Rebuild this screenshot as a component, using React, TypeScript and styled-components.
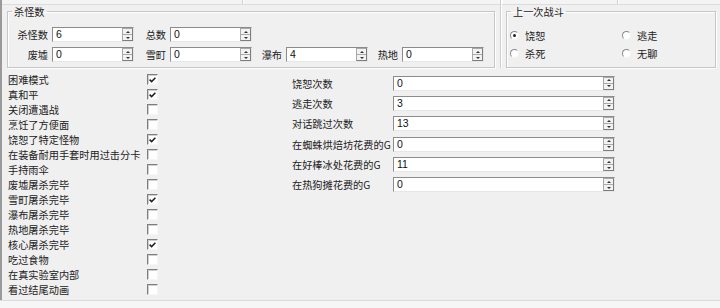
import React from 'react';
import styled, { createGlobalStyle } from 'styled-components';

const GlobalStyle = createGlobalStyle`
  html, body {
    margin: 0;
    padding: 0;
    background: #f0f0f0;
  }
  body {
    font-family: "Noto Sans CJK SC", "Liberation Sans", sans-serif;
    font-size: 10.2px;
    color: #222;
  }
`;

const Window = styled.div`
  width: 720px;
  height: 308px;
  display: flex;
  flex-direction: column;
  overflow: hidden;
  background: #f0f0f0;
`;

const Main = styled.div`
  flex: 1;
  display: flex;
  flex-direction: column;
  border-left: 2px solid #9a9a9a;
`;

const TopStrip = styled.div`
  height: 4px;
  display: flex;
  border-bottom: 1px solid #dcdcdc;
  background: #f4f4f4;
`;

const StripSeg = styled.div<{ $w: number }>`
  width: ${p => p.$w}px;
  border-right: 1px solid #d0d0d0;
  box-shadow: 1px 0 0 #fff;
`;

const TopRow = styled.div`
  display: flex;
  align-items: stretch;
  height: 63px;
`;

const Group = styled.fieldset<{ $w: number }>`
  width: ${p => p.$w}px;
  box-sizing: border-box;
  margin: 0 0 0 5px;
  border: 1px solid #c6c6c6;
  box-shadow: inset 1px 1px 0 #fff, 1px 1px 0 #fff;
  padding: 0;
  min-width: 0;
`;

const Legend = styled.legend`
  margin-left: 4px;
  padding: 0 2px;
  font-size: 10.2px;
  line-height: 13px;
  color: #222;
`;

const Separator = styled.div`
  width: 1px;
  margin-left: 5px;
  background: #cfcfcf;
  box-shadow: 1px 0 0 #fff;
  margin-top: -5px;
`;

const KillGrid = styled.div`
  display: grid;
  grid-template-columns: 34px 82px 28px 82px 26px 82px 26px 82px;
  grid-auto-rows: 15px;
  column-gap: 4px;
  row-gap: 5px;
  padding: 9px 0 0 6px;
  align-items: center;
`;

const FieldLabel = styled.span`
  text-align: right;
  line-height: 15px;
  white-space: nowrap;
`;

const Blank = styled.span``;

const SpinBox = styled.div`
  height: 15px;
  box-sizing: border-box;
  display: flex;
  background: #fff;
  border: 1px solid;
  border-color: #8c8c8c #e6e6e6 #e6e6e6 #8c8c8c;
`;

const SpinValue = styled.span`
  flex: 1;
  padding-left: 3px;
  font-family: "Liberation Sans", "DejaVu Sans", sans-serif;
  font-size: 10.5px;
  line-height: 13px;
  color: #111;
`;

const SpinButtons = styled.div`
  width: 11px;
  display: flex;
  flex-direction: column;
  border: 1px solid #a9a9a9;
  border-right-color: #7d7d7d;
  border-bottom-color: #7d7d7d;
  box-sizing: border-box;
  background: #f2f2f2;
`;

const SpinHalf = styled.div<{ $down?: boolean }>`
  flex: 1;
  display: flex;
  align-items: center;
  justify-content: center;
  border-top: ${p => (p.$down ? '1px solid #a9a9a9' : 'none')};
  &::after {
    content: '';
    width: 0;
    height: 0;
    border-left: 2px solid transparent;
    border-right: 2px solid transparent;
    ${p =>
      p.$down
        ? 'border-top: 2px solid #333;'
        : 'border-bottom: 2px solid #333;'}
  }
`;

function Spin({ value }: { value: string }) {
  return (
    <SpinBox>
      <SpinValue>{value}</SpinValue>
      <SpinButtons>
        <SpinHalf />
        <SpinHalf $down />
      </SpinButtons>
    </SpinBox>
  );
}

const RadioGrid = styled.div`
  display: grid;
  grid-template-columns: 112px 80px;
  grid-auto-rows: 15px;
  row-gap: 3px;
  padding: 10px 0 0 3px;
`;

const RadioItem = styled.label`
  display: flex;
  align-items: center;
  gap: 6px;
  line-height: 15px;
`;

const RadioDot = styled.span<{ $on?: boolean }>`
  width: 9px;
  height: 9px;
  box-sizing: border-box;
  border-radius: 50%;
  border: 1px solid;
  border-color: #8a8a8a #f4f4f4 #f4f4f4 #8a8a8a;
  background: #fff;
  display: flex;
  align-items: center;
  justify-content: center;
  &::after {
    content: '';
    width: 3px;
    height: 3px;
    border-radius: 50%;
    background: ${p => (p.$on ? '#222' : 'transparent')};
  }
`;

const BottomArea = styled.div`
  display: flex;
  align-items: flex-start;
  padding-top: 4px;
`;

const CheckList = styled.div`
  display: grid;
  grid-template-columns: 139px 11px;
  grid-auto-rows: 15px;
  padding-left: 6px;
  align-items: center;
`;

const CheckLabel = styled.span`
  line-height: 15px;
  white-space: nowrap;
`;

const CheckBox = styled.span`
  width: 11px;
  height: 11px;
  box-sizing: border-box;
  border: 1px solid;
  border-color: #7e7e7e #f6f6f6 #f6f6f6 #7e7e7e;
  box-shadow: inset 1px 1px 0 #cfcfcf;
  background: #fff;
  display: flex;
  align-items: center;
  justify-content: center;
`;

const CountGrid = styled.div`
  display: grid;
  grid-template-columns: 101px 222px;
  grid-auto-rows: 15px;
  row-gap: 5.4px;
  margin-left: 134px;
  padding-top: 3.5px;
  align-items: center;
`;

const CountLabel = styled.span`
  line-height: 15px;
  white-space: nowrap;
`;

const Footer = styled.div`
  height: 7px;
  border-top: 1px solid #dadada;
  background: #f6f6f6;
`;

function Check({ on }: { on: boolean }) {
  return (
    <CheckBox>
      {on && (
        <svg width="7" height="6" viewBox="0 0 7 6">
          <path d="M0.6 2.6 L2.6 4.6 L6.4 0.8" stroke="#1e1e1e" strokeWidth="1.5" fill="none" />
        </svg>
      )}
    </CheckBox>
  );
}

const checks: [string, boolean][] = [
  ['困难模式', true],
  ['真和平', true],
  ['关闭遭遇战', false],
  ['烹饪了方便面', false],
  ['饶恕了特定怪物', true],
  ['在装备耐用手套时用过击分卡', false],
  ['手持雨伞', false],
  ['废墟屠杀完毕', false],
  ['雪町屠杀完毕', true],
  ['瀑布屠杀完毕', false],
  ['热地屠杀完毕', false],
  ['核心屠杀完毕', true],
  ['吃过食物', false],
  ['在真实验室内部', false],
  ['看过结尾动画', false],
];

const counts: [string, string][] = [
  ['饶恕次数', '0'],
  ['逃走次数', '3'],
  ['对话跳过次数', '13'],
  ['在蜘蛛烘焙坊花费的G', '0'],
  ['在好棒冰处花费的G', '11'],
  ['在热狗摊花费的G', '0'],
];

export default function App() {
  return (
    <Window>
      <GlobalStyle />
      <Main>
        <TopStrip>
          <StripSeg $w={240} />
          <StripSeg $w={258} />
          <StripSeg $w={115} />
        </TopStrip>
        <TopRow>
          <Group $w={488}>
            <Legend>杀怪数</Legend>
            <KillGrid>
              <FieldLabel>杀怪数</FieldLabel>
              <Spin value="6" />
              <FieldLabel>总数</FieldLabel>
              <Spin value="0" />
              <Blank />
              <Blank />
              <Blank />
              <Blank />
              <FieldLabel>废墟</FieldLabel>
              <Spin value="0" />
              <FieldLabel>雪町</FieldLabel>
              <Spin value="0" />
              <FieldLabel>瀑布</FieldLabel>
              <Spin value="4" />
              <FieldLabel>热地</FieldLabel>
              <Spin value="0" />
            </KillGrid>
          </Group>
          <Separator />
          <Group $w={210}>
            <Legend>上一次战斗</Legend>
            <RadioGrid>
              <RadioItem><RadioDot $on />饶恕</RadioItem>
              <RadioItem><RadioDot />逃走</RadioItem>
              <RadioItem><RadioDot />杀死</RadioItem>
              <RadioItem><RadioDot />无聊</RadioItem>
            </RadioGrid>
          </Group>
        </TopRow>
        <BottomArea>
          <CheckList>
            {checks.map(([label, on]) => (
              <React.Fragment key={label}>
                <CheckLabel>{label}</CheckLabel>
                <Check on={on} />
              </React.Fragment>
            ))}
          </CheckList>
          <CountGrid>
            {counts.map(([label, value]) => (
              <React.Fragment key={label}>
                <CountLabel>{label}</CountLabel>
                <Spin value={value} />
              </React.Fragment>
            ))}
          </CountGrid>
        </BottomArea>
      </Main>
      <Footer />
    </Window>
  );
}
